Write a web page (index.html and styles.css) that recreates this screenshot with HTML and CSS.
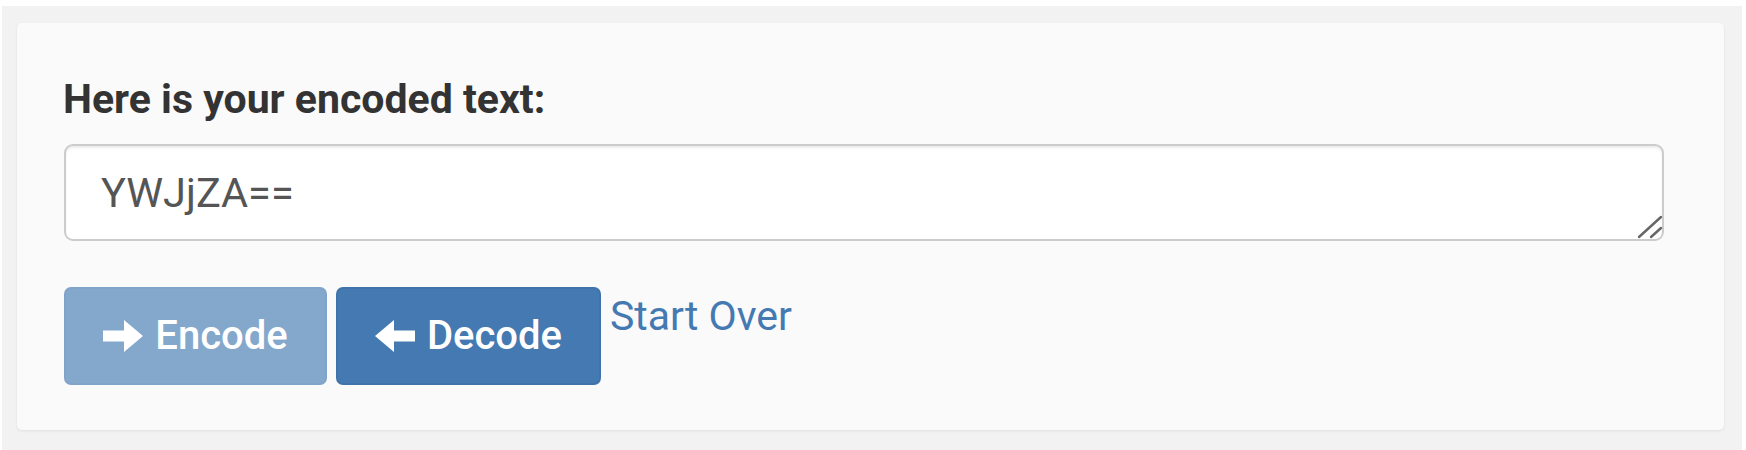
FILE: index.html
```html
<!DOCTYPE html>
<html lang="en">
<head>
<meta charset="utf-8">
<title>Base64 Encoder</title>
<link rel="stylesheet" href="styles.css">
</head>
<body>
<div class="page">
  <div class="card">
    <label class="label" for="output">Here is your encoded text:</label>
    <div class="field">
      <textarea id="output" class="output" rows="1">YWJjZA==</textarea>
      <svg class="grip" width="28" height="28" viewBox="0 0 28 28" aria-hidden="true">
        <line x1="3" y1="24" x2="25" y2="4" stroke="#666" stroke-width="2.4" stroke-linecap="round"/>
        <line x1="15" y1="24" x2="25" y2="15" stroke="#666" stroke-width="2.4" stroke-linecap="round"/>
      </svg>
    </div>
    <div class="actions">
      <button class="btn btn-encode" type="button" disabled>
        <svg class="icon" width="40" height="32" viewBox="0 0 40 32" aria-hidden="true">
          <rect x="0" y="10.5" width="22" height="11" fill="#fff"/>
          <polygon points="21,0 40,16 21,32" fill="#fff"/>
        </svg>
        <span>Encode</span>
      </button>
      <button class="btn btn-decode" type="button">
        <svg class="icon" width="40" height="32" viewBox="0 0 40 32" aria-hidden="true">
          <rect x="18" y="10.5" width="22" height="11" fill="#fff"/>
          <polygon points="19,0 0,16 19,32" fill="#fff"/>
        </svg>
        <span>Decode</span>
      </button>
      <a class="start-over" href="#">Start Over</a>
    </div>
  </div>
</div>
</body>
</html>
```
FILE: styles.css
```css
html, body {
  margin: 0;
  padding: 0;
  background: #ffffff;
}

body {
  font-family: Roboto, "Liberation Sans", Arial, sans-serif;
}

.page {
  margin: 6px 4px 0 2px;
  background: #f2f2f2;
  padding: 17px 18px 20px 15px;
  height: 444px;
  box-sizing: border-box;
}

.card {
  background: #fafafa;
  border-radius: 5px;
  box-shadow: 0 1px 3px rgba(0, 0, 0, 0.08);
  padding: 54px 60px 45px 47px;
  height: 407px;
  box-sizing: border-box;
  display: flex;
  flex-direction: column;
}

.label {
  display: block;
  margin-left: -1px;
  font-size: 41px;
  line-height: 44px;
  font-weight: 700;
  color: #333333;
}

.field {
  position: relative;
  margin-top: 23px;
}

.output {
  display: block;
  width: 100%;
  height: 97px;
  box-sizing: border-box;
  border: 2px solid #cccccc;
  border-radius: 9px;
  background: #ffffff;
  box-shadow: inset 0 2px 2px rgba(0, 0, 0, 0.075);
  padding: 23px 35px 0 35px;
  font-family: Roboto, "Liberation Sans", Arial, sans-serif;
  font-size: 41.5px;
  line-height: 48px;
  color: #555555;
  resize: none;
  overflow: hidden;
  outline: none;
}

.grip {
  position: absolute;
  right: 0;
  bottom: 0;
  pointer-events: none;
}

.actions {
  margin-top: 46px;
  display: flex;
  align-items: flex-start;
  gap: 9px;
}

.btn {
  height: 98px;
  box-sizing: border-box;
  border-radius: 7px;
  display: flex;
  align-items: center;
  justify-content: center;
  gap: 12px;
  padding: 0;
  font-family: Roboto, "Liberation Sans", Arial, sans-serif;
  font-size: 40px;
  font-weight: 500;
  line-height: 44px;
  color: #ffffff;
  cursor: pointer;
}

.btn .icon {
  display: block;
  flex: none;
}

.btn-encode {
  width: 263px;
  background: #84a8cc;
  border: 2px solid #80a4c9;
  cursor: not-allowed;
}

.btn-decode {
  width: 265px;
  background: #4479b1;
  border: 2px solid #4073aa;
}

.start-over {
  margin-top: 7px;
  font-size: 41px;
  line-height: 44px;
  color: #4479b1;
  text-decoration: none;
}
```
